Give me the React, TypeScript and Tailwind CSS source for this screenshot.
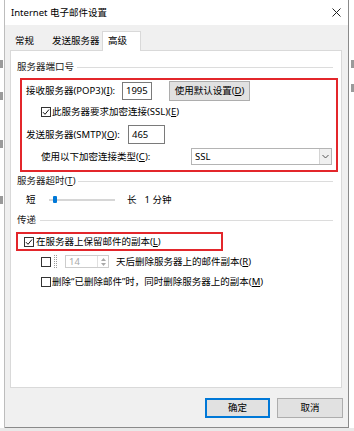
import React from "react";

const font = "font-['Noto_Sans','Noto_Sans_CJK_SC',sans-serif]";

const CheckBox: React.FC<{ checked?: boolean }> = ({ checked }) => (
  <div className="w-[10px] h-[10px] border border-[#333] bg-white flex items-center justify-center shrink-0">
    {checked && (
      <svg width="8" height="8" viewBox="0 0 8 8">
        <path d="M1 4.2 L3 6.3 L7 1.5" fill="none" stroke="#111" strokeWidth="1" />
      </svg>
    )}
  </div>
);

const Header: React.FC<{ label: React.ReactNode; gap: string; className?: string }> = ({
  label,
  gap,
  className,
}) => (
  <div className={`flex items-center h-[14px] pl-[6px] pr-[8px] ${className ?? ""}`}>
    <span className="whitespace-nowrap leading-[14px] text-[#1a1a1a]">{label}</span>
    <div className={`flex-1 h-px bg-[#dcdcdc] ${gap}`} />
  </div>
);

const App: React.FC = () => {
  return (
    <div className={`w-[354px] h-[431px] overflow-hidden flex bg-[#e9e9e9] text-[9.5px] text-black ${font}`}>
      {/* window behind, left edge */}
      <div className="w-[5px] h-[428px] bg-white border-r border-[#bdbdbd] flex flex-col items-start">
        <div className="mt-[60px] w-[3px] h-[8px] bg-[#9a9a9a]" />
        <div className="mt-[24px] w-[3px] h-[8px] bg-[#9a9a9a]" />
        <div className="mt-[40px] w-[3px] h-[8px] bg-[#9a9a9a]" />
        <div className="mt-[48px] w-[3px] h-[8px] bg-[#9a9a9a]" />
      </div>

      {/* dialog */}
      <div className="w-[344px] h-[428px] flex flex-col bg-[#f0f0f0] border-r border-b border-[#8a8a8a] shrink-0">
        {/* title bar */}
        <div className="h-[25px] bg-white flex items-center pl-[6px] pr-[7px] shrink-0">
          <span className="leading-[14px]">Internet 电子邮件设置</span>
          <svg className="ml-auto" width="9" height="9" viewBox="0 0 9 9">
            <path d="M0.5 0.5 L8.5 8.5 M8.5 0.5 L0.5 8.5" stroke="#222" strokeWidth="1" />
          </svg>
        </div>

        {/* tabs */}
        <div className="h-[25px] flex items-end pl-[5px] shrink-0">
          <div className="w-[37px] h-[18px] pl-[5px] flex items-center leading-[14px]">常规</div>
          <div className="w-[55px] h-[18px] pl-[5px] flex items-center leading-[14px]">发送服务器</div>
          <div className="relative z-10 w-[39px] h-[20px] -mb-px pl-[5px] pb-[2px] flex items-center leading-[14px] bg-white border-x border-t border-[#d9d9d9]">
            高级
          </div>
        </div>

        {/* tab panel */}
        <div className="ml-[5px] mr-[6px] h-[338px] bg-white border border-[#d9d9d9] flex flex-col shrink-0">
          <Header label="服务器端口号" gap="ml-[3px]" className="mt-[9px]" />

          <div className="mt-[4px] ml-[9px] mr-[3px] h-[94px] border-2 border-[#e3262b] flex flex-col">
            <div className="mt-[1px] h-[20px] flex items-center">
              <span className="w-[100px] pl-[4px] leading-[14px] whitespace-nowrap">
                接收服务器(POP3)(<u>I</u>):
              </span>
              <div className="w-[30px] h-[18px] border border-[#7a7a7a] bg-white pl-[3px] flex items-center leading-[14px]">
                1995
              </div>
              <div className="ml-[17px] w-[81px] h-[20px] bg-[#e1e1e1] border border-[#adadad] flex items-center justify-center leading-[14px] whitespace-nowrap">
                使用默认设置(<u>D</u>)
              </div>
            </div>

            <div className="mt-[4px] h-[14px] pl-[19px] flex items-center">
              <CheckBox checked />
              <span className="ml-[1px] leading-[14px] whitespace-nowrap">
                此服务器要求加密连接(SSL)(<u>E</u>)
              </span>
            </div>

            <div className="mt-[6px] h-[19px] flex items-center">
              <span className="w-[106px] pl-[4px] leading-[14px] whitespace-nowrap">
                发送服务器(SMTP)(<u>O</u>):
              </span>
              <div className="w-[37px] h-[19px] border border-[#7a7a7a] bg-white pl-[3px] flex items-center leading-[14px]">
                465
              </div>
            </div>

            <div className="mt-[4px] h-[17px] flex items-center">
              <span className="w-[169px] pl-[19px] leading-[14px] whitespace-nowrap">
                使用以下加密连接类型(<u>C</u>):
              </span>
              <div className="w-[141px] h-[17px] border border-[#b4b4b4] bg-white flex items-center">
                <span className="pl-[3px] leading-[14px]">SSL</span>
                <div className="ml-auto w-[12px] h-full border-l border-[#d4d4d4] bg-[#f0f0f0] flex items-center justify-center">
                  <svg width="7" height="5" viewBox="0 0 7 5">
                    <path d="M0.5 1 L3.5 4 L6.5 1" fill="none" stroke="#555" strokeWidth="1" />
                  </svg>
                </div>
              </div>
            </div>
          </div>

          <Header label={<>服务器超时(<u>T</u>)</>} gap="ml-[2px]" className="mt-[2px]" />

          <div className="mt-[5px] h-[14px] pl-[15px] flex items-center">
            <span className="w-[23px] leading-[14px]">短</span>
            <div className="relative w-[66px] h-[2px] bg-[#d6d6d6]">
              <div className="absolute left-[4px] top-[-3px] w-[4px] h-[7px] rounded-[1px] bg-[#0078d7]" />
            </div>
            <span className="ml-[12px] leading-[14px]">长</span>
            <span className="ml-[8px] leading-[14px] whitespace-nowrap">1 分钟</span>
          </div>

          <Header label="传递" gap="ml-[4px]" className="mt-[6px]" />

          <div className="mt-[5px] ml-[5px] w-[207px] h-[19px] border-2 border-[#e3262b] pl-[6px] flex items-center">
            <CheckBox checked />
            <span className="ml-[2px] leading-[14px] whitespace-nowrap">
              在服务器上保留邮件的副本(<u>L</u>)
            </span>
          </div>

          <div className="mt-[4px] h-[13px] pl-[30px] flex items-center">
            <CheckBox />
            <div className="ml-[3px] w-[3px] h-[13px] border border-dotted border-[#9a9a9a]" />
            <div className="ml-[8px] w-[44px] h-[13px] border border-[#cccccc] bg-white flex items-center">
              <span className="pl-[3px] leading-[12px] text-[#a8a8a8]">14</span>
              <div className="ml-auto w-[11px] h-full border-l border-[#e0e0e0] flex flex-col items-center justify-center gap-[2px]">
                <svg width="5" height="3" viewBox="0 0 5 3">
                  <path d="M0 3 L2.5 0 L5 3 Z" fill="#a8a8a8" />
                </svg>
                <svg width="5" height="3" viewBox="0 0 5 3">
                  <path d="M0 0 L2.5 3 L5 0 Z" fill="#a8a8a8" />
                </svg>
              </div>
            </div>
            <span className="ml-[7px] leading-[14px] whitespace-nowrap">
              天后删除服务器上的邮件副本(<u>R</u>)
            </span>
          </div>

          <div className="mt-[7px] h-[14px] pl-[30px] flex items-center">
            <CheckBox />
            <span className="ml-[1px] leading-[14px] whitespace-nowrap">
              删除“已删除邮件”时，同时删除服务器上的副本(<u>M</u>)
            </span>
          </div>
        </div>

        {/* buttons */}
        <div className="mt-[10px] h-[20px] flex justify-end gap-[7px] pr-[5px] shrink-0">
          <div className="w-[65px] h-[20px] bg-[#e1e1e1] border-2 border-[#0078d7] flex items-center justify-center leading-[14px]">
            确定
          </div>
          <div className="w-[66px] h-[20px] bg-[#e1e1e1] border border-[#adadad] flex items-center justify-center leading-[14px]">
            取消
          </div>
        </div>
      </div>

      {/* window behind, right edge */}
      <div className="w-[5px] h-[428px] bg-white flex flex-col items-end">
        <div className="mt-[60px] w-[3px] h-[8px] bg-[#9a9a9a]" />
        <div className="mt-[16px] w-[3px] h-[8px] bg-[#9a9a9a]" />
      </div>
    </div>
  );
};

export default App;
